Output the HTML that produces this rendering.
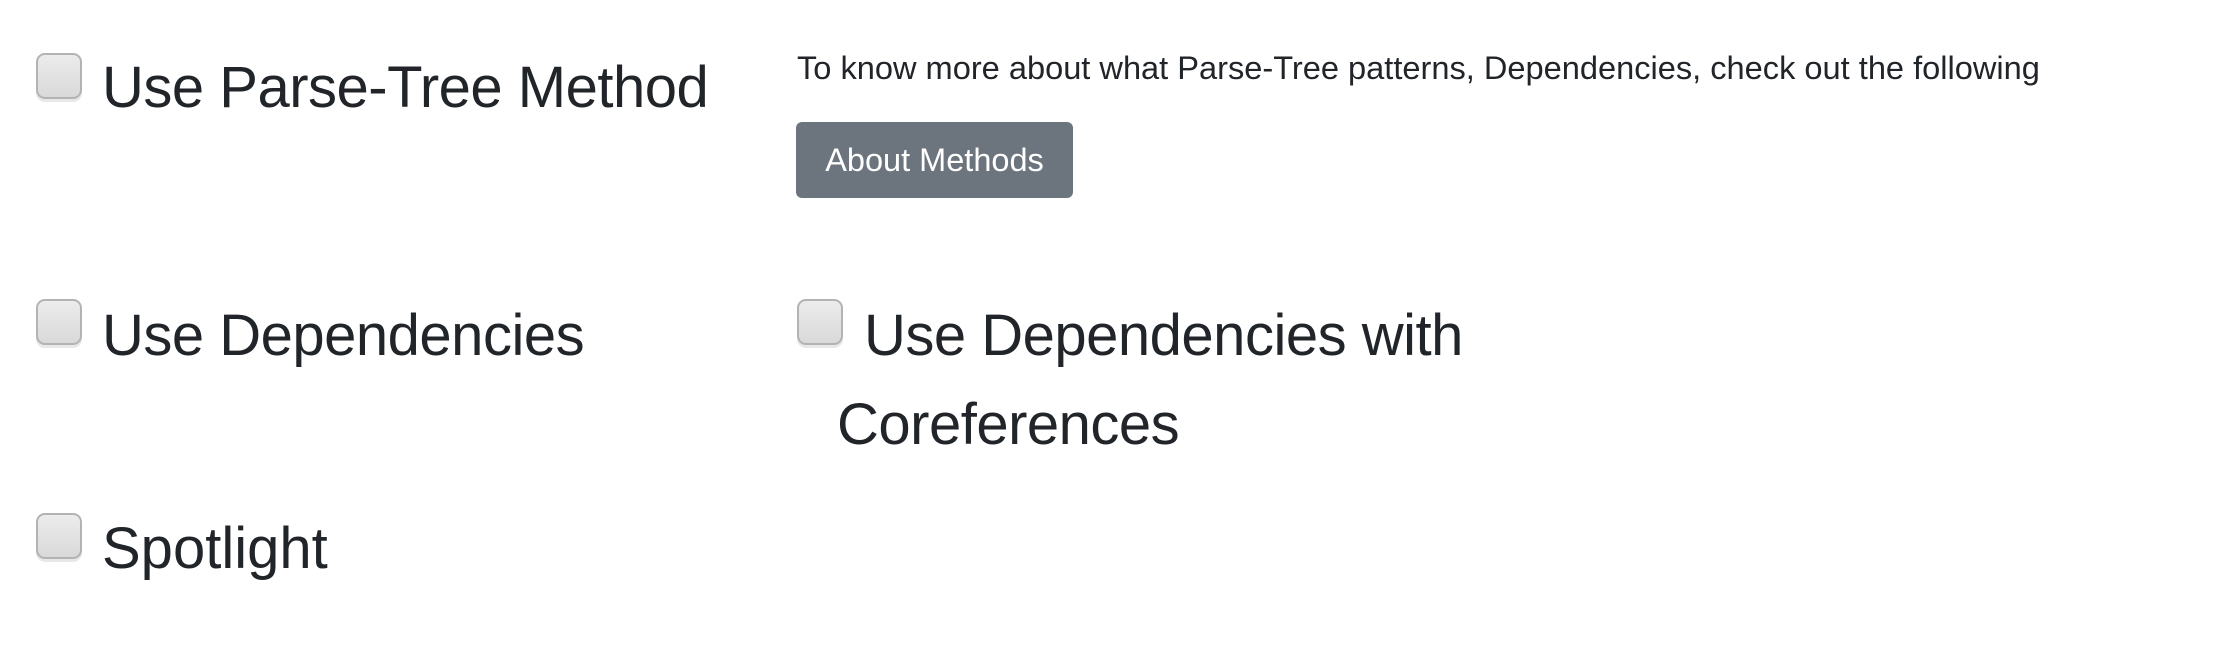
<!DOCTYPE html>
<html><head><style>
html,body{margin:0;padding:0;background:#fff;width:2220px;height:664px;overflow:hidden;font-family:"Liberation Sans",sans-serif;color:#212529}
.t{position:absolute;line-height:1;font-size:58px;white-space:nowrap;letter-spacing:-0.5px}
.cb{position:absolute;width:42px;height:42px;border:2px solid #b3b3b3;border-radius:9px;background:linear-gradient(#ececec,#d9d9d9);box-shadow:0 3px 0 #e8e8e8;box-sizing:content-box}
.s{position:absolute;line-height:1;font-size:32.6px;white-space:nowrap}
.btn{position:absolute;left:796px;top:122px;width:277px;height:76px;background:#6c757d;border-radius:6px;color:#fff;font-size:32.5px;line-height:76px;text-align:center}
</style></head><body>
<div class="cb" style="left:36px;top:53px"></div>
<div class="t" style="left:102px;top:59px">Use Parse-Tree Method</div>
<div class="s" style="left:797px;top:52px">To know more about what Parse-Tree patterns, Dependencies, check out the following</div>
<div class="btn">About Methods</div>
<div class="cb" style="left:36px;top:299px"></div>
<div class="t" style="left:102px;top:307px">Use Dependencies</div>
<div class="cb" style="left:797px;top:299px"></div>
<div class="t" style="left:864px;top:307px">Use Dependencies with</div>
<div class="t" style="left:837px;top:396px">Coreferences</div>
<div class="cb" style="left:36px;top:513px"></div>
<div class="t" style="left:102px;top:520px;letter-spacing:0">Spotlight</div>
</body></html>
